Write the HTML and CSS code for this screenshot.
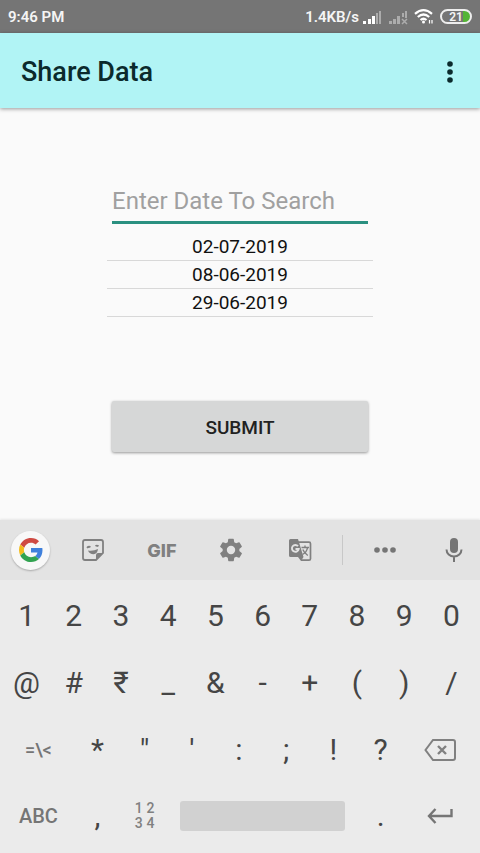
FILE: index.html
```html
<!DOCTYPE html>
<html lang="en">
<head>
<meta charset="utf-8">
<meta name="viewport" content="width=device-width, initial-scale=1">
<title>Share Data</title>
<link rel="stylesheet" href="styles.css">
</head>
<body>
<div class="status">
  <span class="time">9:46 PM</span>
  <span class="rate">1.4KB/s</span>
  <svg class="signal" width="20" height="16" viewBox="0 0 20 16" fill="#fff" aria-hidden="true">
    <path d="M0 12h3v3H0zM5 10h3v5H5zM9 7h3v8H9z"/><path opacity=".4" d="M13 4h2v11h-2zM16 2h2v13h-2z"/>
  </svg>
  <svg class="signal-off" width="20" height="16" viewBox="0 0 20 16" fill="#fff" opacity=".4" aria-hidden="true">
    <path d="M1 12h3v3H1zM5 10h3v5H5zM9 7h3v8H9zM14 4h2v4h-2zM17 2h2v7h-2z"/><path d="M14 10l5 5M19 10l-5 5" stroke="#fff" stroke-width="1.5"/>
  </svg>
  <svg class="wifi" width="20" height="17" viewBox="0 0 20 17" fill="none" stroke="#fff" stroke-width="2.2" aria-hidden="true">
    <path d="M1 5.800Q9.500-1.500 18 5.800M3.800 9Q9.500 4 15.200 9M6.500 12Q9.500 9.500 12.500 12"/><circle cx="9.500" cy="14" r="1.500" fill="#fff" stroke="none"/><path d="M15.500 12v3.500M18 12v3.500" stroke-width="1.200"/>
  </svg>
  <span class="battery">21</span>
</div>
<header class="appbar">
  <h1>Share Data</h1>
  <button class="more" aria-label="More options">
    <svg width="8" height="24" viewBox="0 0 8 24" fill="#0b2a2c"><circle cx="4" cy="4" r="2.800"/><circle cx="4" cy="12" r="2.800"/><circle cx="4" cy="20" r="2.800"/></svg>
  </button>
</header>
<main class="content">
  <input class="search" type="text" placeholder="Enter Date To Search" aria-label="Enter Date To Search">
  <ul class="dates">
    <li>02-07-2019</li>
    <li>08-06-2019</li>
    <li>29-06-2019</li>
  </ul>
  <button class="submit">SUBMIT</button>
</main>
<section class="keyboard" aria-label="Keyboard">
  <div class="tools">
    <button class="google" aria-label="Google">
      <svg width="24" height="24" viewBox="0 0 48 48"><path fill="#cf4a43" d="M24 9.500c3.540 0 6.710 1.220 9.210 3.600l6.850-6.850C35.900 2.380 30.470 0 24 0 14.620 0 6.510 5.380 2.560 13.220l7.980 6.190C12.430 13.720 17.740 9.500 24 9.500z"/><path fill="#3f80dc" d="M46.980 24.550c0-1.570-.15-3.090-.38-4.550H24v9.020h12.940c-.58 2.960-2.260 5.480-4.780 7.180l7.730 6c4.510-4.180 7.090-10.360 7.090-17.650z"/><path fill="#f2bb1c" d="M10.530 28.590c-.48-1.450-.76-2.990-.76-4.590s.27-3.140.76-4.590l-7.980-6.190C.92 16.460 0 20.120 0 24s.92 7.540 2.560 10.780z"/><path fill="#31a350" d="M24 48c6.480 0 11.930-2.130 15.890-5.810l-7.730-6c-2.150 1.450-4.920 2.300-8.160 2.300-6.260 0-11.570-4.220-13.470-9.910l-7.980 6.190C6.510 42.620 14.620 48 24 48z"/></svg>
    </button>
    <button aria-label="Stickers">
      <svg width="24" height="24" viewBox="0 0 24 24" fill="none" stroke="#808080" stroke-width="1.800"><path d="M4 2h16q2 0 2 2v11l-7 7H4q-2 0-2-2V4q0-2 2-2z"/><path fill="#808080" stroke="none" d="M15 22v-5q0-2 2-2h5zM7 12.500q5 1 10-1.500-.5 5-4.500 5.300-4 0-5.500-3.800z"/><path d="M6 9.800q1.500-1.500 3.500-.8M14.500 8q1.500-1 3 .3"/></svg>
    </button>
    <button class="gif">GIF</button>
    <button aria-label="Settings">
      <svg width="28" height="28" viewBox="0 0 24 24" fill="#808080"><path d="M19.140 12.940c.04-.3.060-.61.060-.94s-.02-.64-.07-.94l2.030-1.580a.49.49 0 0 0 .12-.61l-1.920-3.320a.49.49 0 0 0-.59-.22l-2.390.96a7 7 0 0 0-1.620-.94L14.400 2.810a.48.48 0 0 0-.48-.41h-3.840a.47.470 0 0 0-.47.410l-.36 2.540a7 7 0 0 0-1.620.94l-2.390-.96a.48.48 0 0 0-.59.220L2.740 8.870a.48.480 0 0 0 .12.610l2.030 1.580a7 7 0 0 0 0 1.880l-2.030 1.580a.49.490 0 0 0-.12.610l1.920 3.320c.12.220.370.290.590.220l2.390-.96c.5.380 1.030.7 1.620.94l.36 2.540c.05.240.240.410.480.410h3.840c.24 0 .44-.17.470-.41l.36-2.540a7 7 0 0 0 1.620-.94l2.390.96c.22.080.470 0 .59-.22l1.920-3.320a.48.480 0 0 0-.12-.61zM12 15.600a3.600 3.600 0 1 1 0-7.200 3.600 3.600 0 0 1 0 7.200z"/></svg>
    </button>
    <button aria-label="Translate">
      <svg width="24" height="24" viewBox="0 0 24 24" fill="none"><path d="M10 4.200h11q1.500 0 1.500 1.500v15q0 1.500-1.500 1.500h-8" stroke="#808080" stroke-width="1.700"/><path fill="#808080" d="M2.500 1h7.500l5.500 18H2.500Q1 19 1 17.500v-15Q1 1 2.500 1zM10 19h5.500L13 23z"/><path d="M10 8.200A3.400 3.400 0 1 0 10.700 11H7.500" stroke="#e3e3e3" stroke-width="1.900"/><path d="M13.500 9.500H21M17 7.500v2M19.500 9.800q-1 4.500-5 6.700M14.800 11.500q1.500 3.500 5 6" stroke="#808080" stroke-width="1.400"/></svg>
    </button>
    <span class="divider"></span>
    <button aria-label="More tools">
      <svg width="24" height="8" viewBox="0 0 24 8" fill="#757575"><circle cx="4" cy="4" r="2.800"/><circle cx="12" cy="4" r="2.800"/><circle cx="20" cy="4" r="2.800"/></svg>
    </button>
    <button class="mic" aria-label="Voice input">
      <svg width="18" height="24" viewBox="0 0 18 24"><rect x="5" y="0" width="8" height="15" rx="4" fill="#757575"/><path d="M1.500 11.500a7.500 7 0 0 0 15 0M9 18.500V24" fill="none" stroke="#757575" stroke-width="2"/></svg>
    </button>
  </div>
  <div class="keys">
    <div class="row ten"><button>1</button><button>2</button><button>3</button><button>4</button><button>5</button><button>6</button><button>7</button><button>8</button><button>9</button><button>0</button></div>
    <div class="row ten"><button>@</button><button>#</button><button>₹</button><button>_</button><button>&amp;</button><button>-</button><button>+</button><button>(</button><button>)</button><button>/</button></div>
    <div class="row nine"><button class="alt small">=\&lt;</button><button>*</button><button>"</button><button>'</button><button>:</button><button>;</button><button>!</button><button>?</button>
      <button aria-label="Backspace"><svg width="32" height="22" viewBox="0 0 32 22" fill="none" stroke="#808080" stroke-width="2"><path d="M9 1h20q2 0 2 2v16q0 2-2 2H9L1.500 11z"/><path d="M14 7l8 8M22 7l-8 8" stroke-width="2.400"/></svg></button></div>
    <div class="row bottom"><button class="alt">ABC</button><button>,</button><button class="numpad"><span>1</span><span>2</span><span>3</span><span>4</span></button><button class="space" aria-label="Space"></button><button>.</button>
      <button aria-label="Enter"><svg width="26" height="16" viewBox="0 0 26 16" fill="none" stroke="#757575" stroke-width="2.400"><path d="M24.500 1v7H2M8.500 1L2 8l6.500 7"/></svg></button></div>
  </div>
</section>
</body>
</html>
```
FILE: styles.css
```css
* { box-sizing: border-box; }
body {
  margin: 0;
  min-height: 100vh;
  display: flex;
  flex-direction: column;
  background: #fafafa;
  font-family: Roboto, "Noto Sans", sans-serif;
}
button {
  border: 0;
  padding: 0;
  background: none;
  font: inherit;
  color: inherit;
  display: flex;
  align-items: center;
  justify-content: center;
}
svg { display: block; }
.status {
  height: 33px;
  padding: 0 8px;
  display: flex;
  align-items: center;
  background: #757575;
  color: #f5f5f5;
  font-size: 15px;
  font-weight: 600;
}
.rate { margin-left: auto; }
.signal { margin: 0 5px 0 4px; }
.wifi { margin: 0 6px; }
.battery {
  width: 32px;
  height: 15px;
  border: 2px solid #eee;
  border-radius: 8px;
  background: linear-gradient(90deg, #757575 75%, #54b435 75%);
  font-size: 12px;
  line-height: 12px;
  text-align: center;
}
.appbar {
  height: 75px;
  padding: 2px 20px 0 21px;
  display: flex;
  align-items: center;
  justify-content: space-between;
  background: #b1f4f5;
  box-shadow: 0 1px 4px rgba(0, 0, 0, .4);
}
.appbar h1 {
  margin: 0;
  font-size: 27px;
  font-weight: 500;
  line-height: 32px;
  color: #0b2a2c;
}
.more { width: 20px; height: 40px; }
.content {
  flex: 1;
  padding: 72px 107px 64px;
  display: flex;
  flex-direction: column;
}
.search {
  height: 44px;
  margin: 0 5px;
  padding: 0;
  border: 0;
  border-bottom: 3px solid #2a9080;
  border-radius: 0;
  outline: 0;
  background: none;
  font-family: inherit;
  font-size: 24px;
  min-width: 0;
}
.search::placeholder { color: #a0a0a0; opacity: 1; }
.dates {
  margin: 9px 0 0;
  padding: 0;
  list-style: none;
  text-align: center;
  font-size: 19px;
  color: #111;
}
.dates li {
  height: 28px;
  line-height: 27px;
  border-bottom: 1px solid #d8d8d8;
}
.submit {
  height: 51px;
  margin: auto 5px 4px;
  padding-top: 2px;
  border-radius: 2px;
  background: #d6d7d7;
  box-shadow: 0 1px 3px rgba(0, 0, 0, .4);
  color: #212121;
  font-size: 19px;
  font-weight: 500;
}
.keyboard {
  background: #ebebeb;
  color: #454545;
  box-shadow: 0 -1px 2px rgba(0, 0, 0, .08);
}
.tools {
  height: 60px;
  padding: 0 17px 0 11px;
  display: grid;
  grid-template-columns: 47fr repeat(4, 69fr) 16fr 69fr 43fr;
  align-items: center;
  background: #e3e3e3;
}
.google {
  width: 39px;
  height: 39px;
  border-radius: 50%;
  background: #f8f8f8;
  box-shadow: 0 1px 2px rgba(0, 0, 0, .25);
}
.gif {
  color: #808080;
  font-family: Inter, Roboto, sans-serif;
  font-size: 18px;
  font-weight: 800;
}
.divider {
  width: 1px;
  height: 30px;
  justify-self: center;
  background: #c8c8c8;
}
.mic { justify-content: flex-end; }
.keys { padding: 2px 5px 5px 3px; }
.row {
  display: grid;
  height: 67px;
  font-size: 30px;
}
.row button { min-width: 0; }
.ten { grid-template-columns: repeat(10, 1fr); }
.nine { grid-template-columns: 3fr repeat(7, 2fr) 3fr; }
.bottom { grid-template-columns: 3fr 2fr 2fr 8fr 2fr 3fr; height: 65px; }
.row .alt {
  color: #757575;
  font-size: 20px;
  font-weight: 500;
}
.row .small { font-size: 18px; }
.row .numpad {
  display: grid;
  grid-template-columns: auto auto;
  align-content: center;
  column-gap: 4px;
  color: #808080;
  font-size: 14px;
  font-weight: 500;
  line-height: 15px;
}
.row .space {
  height: 30px;
  margin: auto 12px;
  border-radius: 3px;
  background: #d1d1d1;
}
```
